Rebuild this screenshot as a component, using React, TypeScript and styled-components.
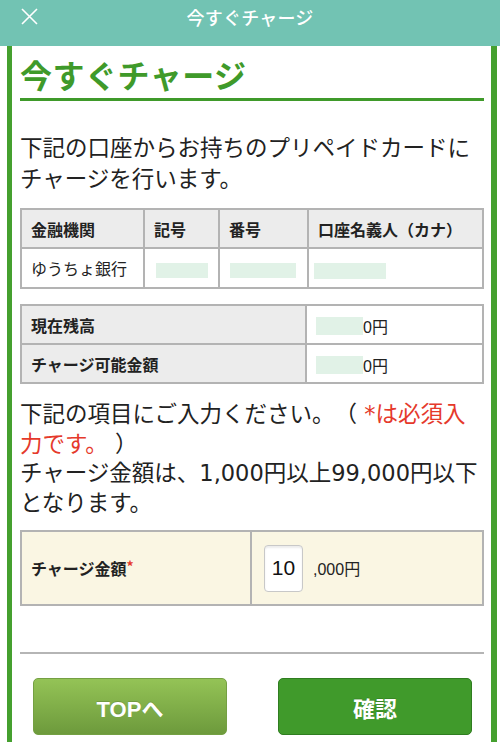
import React from "react";
import styled, { createGlobalStyle } from "styled-components";

const Global = createGlobalStyle`
  html, body { margin: 0; padding: 0; background: #ffffff; }
  body {
    font-family: "Noto Sans CJK JP", "Noto Sans", sans-serif;
    color: #222222;
    text-spacing-trim: space-all;
  }
  * { box-sizing: border-box; }
`;

const TopBar = styled.header`
  height: 46px;
  background: #72c3b3;
  display: flex;
  align-items: center;
  justify-content: center;
  position: relative;
`;

const TopTitle = styled.div`
  color: #ffffff;
  font-size: 18px;
  font-weight: 500;
  letter-spacing: 0.2px;
  margin-top: -12px;
`;

const CloseButton = styled.button`
  position: absolute;
  left: 19px;
  top: 6px;
  width: 20px;
  height: 20px;
  padding: 0;
  border: none;
  background: transparent;
  display: flex;
  align-items: center;
  justify-content: center;
`;

const Frame = styled.main`
  margin: 0 3px 0 7px;
  border-left: 5px solid #45a02f;
  border-right: 6px solid #45a02f;
  padding: 8px 7px 20px 8px;
`;

const Heading = styled.h1`
  margin: 0;
  font-size: 32px;
  line-height: 40px;
  font-weight: 700;
  color: #3f9a2a;
  padding-bottom: 4px;
  border-bottom: 3px solid #3f9a2a;
  letter-spacing: 0.5px;
`;

const Lead = styled.p<{ $top: number }>`
  margin: ${(p) => p.$top}px 0 0;
  font-family: "DejaVu Sans", "Noto Sans CJK JP", sans-serif;
  font-size: 22.5px;
  line-height: ${(p) => (p.$top > 20 ? 31 : 29.5)}px;
  color: #222222;
`;

const Required = styled.span`
  color: #e5392b;
`;

const Table = styled.table<{ $top: number; $bg?: string }>`
  width: 100%;
  margin-top: ${(p) => p.$top}px;
  border-collapse: collapse;
  table-layout: fixed;
  border: 2px solid #b3b3b3;
  background: ${(p) => p.$bg || "#ffffff"};
`;

const HeadCell = styled.th<{ $h?: number; $bg?: string }>`
  border: 2px solid #b3b3b3;
  background: ${(p) => p.$bg || "#ececec"};
  height: ${(p) => p.$h || 39}px;
  padding: 0 0 0 9px;
  text-align: left;
  font-size: 16px;
  font-weight: 700;
  color: #222222;
  white-space: nowrap;
`;

const Cell = styled.td<{ $h?: number; $pad?: number }>`
  border: 2px solid #b3b3b3;
  height: ${(p) => p.$h || 39}px;
  padding: 0 0 0 ${(p) => (p.$pad ?? 9)}px;
  font-size: 16px;
  color: #222222;
  white-space: nowrap;
  vertical-align: middle;
`;

const Redacted = styled.span<{ $w: number; $h?: number }>`
  display: inline-block;
  vertical-align: middle;
  width: ${(p) => p.$w}px;
  height: ${(p) => p.$h || 16}px;
  background: #e1f2e7;
`;

const Amount = styled.span`
  vertical-align: middle;
  font-family: "Liberation Sans", "Noto Sans CJK JP", sans-serif;
  font-size: 16px;
`;

const Star = styled.span`
  color: #e5392b;
  font-size: 14px;
  vertical-align: top;
`;

const InputRow = styled.div`
  display: flex;
  align-items: center;
  gap: 10px;
`;

const AmountInput = styled.div`
  width: 39px;
  height: 47px;
  border: 1px solid #c8c8c8;
  border-radius: 4px;
  background: #ffffff;
  box-shadow: inset 0 2px 2px rgba(0, 0, 0, 0.08);
  display: flex;
  align-items: center;
  justify-content: center;
  font-family: "Liberation Sans", sans-serif;
  font-size: 21px;
  color: #111111;
`;

const Rule = styled.hr`
  margin: 46px 0 0;
  border: none;
  border-top: 2px solid #b5b5b5;
`;

const Actions = styled.div`
  margin-top: 24px;
  display: flex;
  justify-content: space-between;
  padding: 0 12px 0 13px;
`;

const ActionButton = styled.button<{ $primary?: boolean }>`
  width: 194px;
  height: 57px;
  border-radius: 5px;
  border: 1px solid ${(p) => (p.$primary ? "#2f7d20" : "#74a043")};
  background: ${(p) =>
    p.$primary ? "#409a2b" : "linear-gradient(#94c356, #6d9a3c)"};
  color: #ffffff;
  font-family: "Liberation Sans", "Noto Sans CJK JP", sans-serif;
  font-size: 22px;
  font-weight: 700;
  padding: 0;
  text-shadow: 0 -1px 0 rgba(0, 0, 0, 0.15);
`;

export default function App() {
  return (
    <>
      <Global />
      <TopBar>
        <CloseButton aria-label="close">
          <svg width="17" height="17" viewBox="0 0 17 17">
            <path d="M1 1 L16 16 M16 1 L1 16" stroke="#ffffff" strokeWidth="1.6" fill="none" />
          </svg>
        </CloseButton>
        <TopTitle>今すぐチャージ</TopTitle>
      </TopBar>
      <Frame>
        <Heading>今すぐチャージ</Heading>
        <Lead $top={32}>下記の口座からお持ちのプリペイドカードにチャージを行います。</Lead>

        <Table $top={13}>
          <colgroup>
            <col style={{ width: 123 }} />
            <col style={{ width: 75 }} />
            <col style={{ width: 89 }} />
            <col />
          </colgroup>
          <thead>
            <tr>
              <HeadCell>金融機関</HeadCell>
              <HeadCell>記号</HeadCell>
              <HeadCell>番号</HeadCell>
              <HeadCell>口座名義人（カナ）</HeadCell>
            </tr>
          </thead>
          <tbody>
            <tr>
              <Cell $h={40}>ゆうちょ銀行</Cell>
              <Cell $h={40} $pad={11}><Redacted $w={52} $h={15} /></Cell>
              <Cell $h={40} $pad={10}><Redacted $w={66} $h={15} /></Cell>
              <Cell $h={40} $pad={5}><Redacted $w={72} $h={16} /></Cell>
            </tr>
          </tbody>
        </Table>

        <Table $top={15}>
          <colgroup>
            <col style={{ width: 285 }} />
            <col />
          </colgroup>
          <tbody>
            <tr>
              <HeadCell as="th" scope="row">現在残高</HeadCell>
              <Cell $pad={9}><Redacted $w={47} $h={18} /><Amount>0円</Amount></Cell>
            </tr>
            <tr>
              <HeadCell as="th" scope="row">チャージ可能金額</HeadCell>
              <Cell $pad={9}><Redacted $w={47} $h={18} /><Amount>0円</Amount></Cell>
            </tr>
          </tbody>
        </Table>

        <Lead $top={16}>
          下記の項目にご入力ください。（ <Required>*は必須入力です。</Required> ）
          <br />
          チャージ金額は、1,000円以上99,000円以下となります。
        </Lead>

        <Table $top={12} $bg="#faf6e3">
          <colgroup>
            <col style={{ width: 230 }} />
            <col />
          </colgroup>
          <tbody>
            <tr>
              <HeadCell as="th" scope="row" $h={74} $bg="#faf6e3">
                チャージ金額<Star>*</Star>
              </HeadCell>
              <Cell $h={74} $pad={12}>
                <InputRow>
                  <AmountInput>10</AmountInput>
                  <Amount>,000円</Amount>
                </InputRow>
              </Cell>
            </tr>
          </tbody>
        </Table>

        <Rule />

        <Actions>
          <ActionButton>TOPへ</ActionButton>
          <ActionButton $primary>確認</ActionButton>
        </Actions>
      </Frame>
    </>
  );
}
